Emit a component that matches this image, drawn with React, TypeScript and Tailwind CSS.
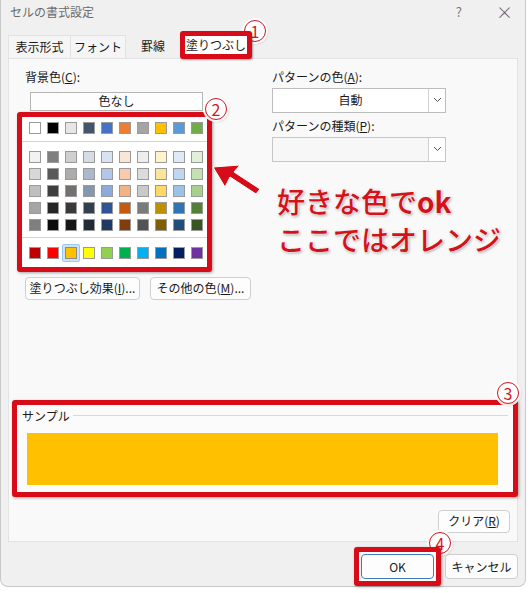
import React from 'react';

const FONT = { fontFamily: '"Noto Sans CJK JP", "Noto Sans", sans-serif' };

const themeRow = ['#ffffff', '#000000', '#e7e6e6', '#44546a', '#4472c4', '#ed7d31', '#a5a5a5', '#ffc000', '#5b9bd5', '#70ad47'];

const tints = [
  ['#f2f2f2', '#7f7f7f', '#d0cece', '#d6dce4', '#d9e2f3', '#fbe5d5', '#ededed', '#fff2cc', '#deebf6', '#e2efd9'],
  ['#d8d8d8', '#595959', '#aeabab', '#adb9ca', '#b4c6e7', '#f7cbac', '#dbdbdb', '#fee599', '#bdd7ee', '#c5e0b3'],
  ['#bfbfbf', '#3f3f3f', '#757070', '#8496b0', '#8eaadb', '#f4b183', '#c9c9c9', '#ffd965', '#9cc3e5', '#a8d08d'],
  ['#a5a5a5', '#262626', '#3a3838', '#323f4f', '#2f5496', '#c55a11', '#7b7b7b', '#bf9000', '#2e75b5', '#538135'],
  ['#7f7f7f', '#0c0c0c', '#171616', '#222a35', '#1f3864', '#833c0b', '#525252', '#7f6000', '#1e4e79', '#375623'],
];

const standard = ['#c00000', '#ff0000', '#ffc000', '#ffff00', '#92d050', '#00b050', '#00b0f0', '#0070c0', '#002060', '#7030a0'];

function Swatch({ color, selected }: { color: string; selected?: boolean }) {
  if (selected) {
    return (
      <div className="w-[12px] h-[12px] relative">
        <div className="absolute -inset-[3px] rounded-[2px] bg-[#cce4f7] border border-[#99c9ef]" />
        <div className="absolute inset-0 border border-[#8a8a8a]" style={{ backgroundColor: color }} />
      </div>
    );
  }
  return <div className="w-[12px] h-[12px] border border-[#9a9a9a]" style={{ backgroundColor: color }} />;
}

function Badge({ n, className }: { n: string; className: string }) {
  return (
    <div
      className={`absolute w-[22px] h-[22px] rounded-full bg-white border-[1.5px] border-[#d41522] flex items-center justify-center text-[#d41522] text-[16px] leading-none shadow-[0_0_0_2px_rgba(255,255,255,0.9),1px_1px_3px_rgba(0,0,0,0.35)] ${className}`}
    >
      {n}
    </div>
  );
}

function Chevron() {
  return (
    <svg width="9" height="6" viewBox="0 0 9 6" fill="none">
      <path d="M1 1l3.5 3.5L8 1" stroke="#555" strokeWidth="1" />
    </svg>
  );
}

export default function App() {
  return (
    <div className="w-[530px] h-[593px] bg-white relative overflow-hidden text-[12px] text-[#1a1a1a]" style={FONT}>
      <div className="w-[526px] h-[587px] bg-[#f0f0f0] border-l border-r border-b border-[#c8c8c8] rounded-b-[8px] flex flex-col">
        {/* title bar */}
        <div className="h-[24px] flex items-center pl-[9px] pr-[12px] text-[#6b6b6b]">
          <span className="text-[12px]">セルの書式設定</span>
          <span className="ml-auto text-[13px] text-[#777]">?</span>
          <span className="ml-[34px] text-[17px] font-light text-[#555] leading-none">×</span>
        </div>

        {/* tabs */}
        <div className="h-[34px] flex items-end pl-[7px]">
          <div className="w-[63px] h-[23px] flex items-center justify-center border border-b-0 border-[#e2e2e2] bg-[#f5f5f5]">表示形式</div>
          <div className="w-[55px] h-[23px] flex items-center justify-center border border-b-0 border-l-0 border-[#e2e2e2] bg-[#f5f5f5]">フォント</div>
          <div className="w-[54px] h-[23px] flex items-center justify-center">罫線</div>
          <div className="w-[72px] h-[28px] -mb-[1px] border-[5px] border-[#d80c18] rounded-[3px] bg-white flex items-center justify-center shadow-[1px_1px_2px_rgba(0,0,0,0.35)] relative z-10">
            塗りつぶし
          </div>
        </div>

        {/* panel */}
        <div className="ml-[7px] w-[510px] h-[485px] bg-[#f9f9f9] border border-[#e3e3e3] flex flex-col">
          <div className="flex pt-[10px]">
            {/* left column */}
            <div className="ml-[8px] w-[195px] shrink-0 flex flex-col">
              <div className="ml-[8px] h-[16px] leading-[16px]">
                背景色(<span className="underline">C</span>):
              </div>
              <div className="ml-[13px] mt-[7px] w-[173px] h-[19px] bg-[#fdfdfd] border border-[#b5b5b5] flex items-center justify-center">
                色なし
              </div>
              <div className="mt-[1px] w-[195px] h-[160px] border-[5px] border-[#d80c18] rounded-[3px] bg-white shadow-[1px_1px_3px_rgba(0,0,0,0.35)] flex flex-col">
                <div className="pl-[7px] pt-[5px] flex gap-[6px]">
                  {themeRow.map((c) => (
                    <Swatch key={c} color={c} />
                  ))}
                </div>
                <div className="mt-[7px] h-px bg-[#d5d5d5]" />
                <div className="pl-[7px] pt-[9px] flex flex-col gap-[5px]">
                  {tints.map((row, i) => (
                    <div key={i} className="flex gap-[6px]">
                      {row.map((c, j) => (
                        <Swatch key={j} color={c} />
                      ))}
                    </div>
                  ))}
                </div>
                <div className="mt-[6px] h-px bg-[#d5d5d5]" />
                <div className="pl-[7px] pt-[9px] flex gap-[6px]">
                  {standard.map((c, i) => (
                    <Swatch key={c} color={c} selected={i === 2} />
                  ))}
                </div>
              </div>
              <div className="mt-[5px] ml-[8px] flex gap-[10px]">
                <div className="shrink-0 w-[115px] h-[23px] bg-[#fdfdfd] border border-[#cfcfcf] rounded-[4px] flex items-center justify-center whitespace-nowrap">
                  塗りつぶし効果(<span className="underline">I</span>)...
                </div>
                <div className="shrink-0 w-[101px] h-[23px] bg-[#fdfdfd] border border-[#cfcfcf] rounded-[4px] flex items-center justify-center whitespace-nowrap">
                  その他の色(<span className="underline">M</span>)...
                </div>
              </div>
            </div>

            {/* right column */}
            <div className="ml-[60px] w-[174px] shrink-0 flex flex-col">
              <div className="h-[16px] leading-[16px]">
                パターンの色(<span className="underline">A</span>):
              </div>
              <div className="mt-[3px] h-[25px] bg-white border border-[#bdbdbd] flex">
                <div className="flex-1 flex items-center justify-center">自動</div>
                <div className="w-[17px] border-l border-[#d0d0d0] flex items-center justify-center">
                  <Chevron />
                </div>
              </div>
              <div className="mt-[5px] h-[16px] leading-[16px]">
                パターンの種類(<span className="underline">P</span>):
              </div>
              <div className="mt-[3px] h-[25px] bg-[#f7f7f7] border border-[#c6c6c6] flex">
                <div className="flex-1" />
                <div className="w-[17px] bg-white border-l border-[#d0d0d0] flex items-center justify-center">
                  <Chevron />
                </div>
              </div>
            </div>
          </div>

          {/* sample */}
          <div className="ml-[3px] mt-[100px] w-[506px] h-[97px] border-[5px] border-[#d80c18] rounded-[3px] bg-[#fbfbfb] shadow-[1px_1px_3px_rgba(0,0,0,0.35)] flex flex-col">
            <div className="h-[22px] flex items-center pl-[5px] pr-[5px]">
              <span>サンプル</span>
              <div className="ml-[3px] flex-1 h-px bg-[#d9d9d9]" />
            </div>
            <div className="ml-[10px] mt-[6px] w-[471px] h-[52px] bg-[#ffc000]" />
          </div>

          <div className="mt-[13px] mr-[7px] self-end w-[72px] h-[23px] bg-[#fdfdfd] border border-[#cfcfcf] rounded-[4px] flex items-center justify-center">
            クリア(<span className="underline">R</span>)
          </div>
        </div>

        {/* bottom buttons */}
        <div className="flex justify-end items-start pr-[7px]">
          <div className="mt-[5px] border-[5px] border-[#d80c18] rounded-[3px] p-[2px] bg-white shadow-[1px_1px_3px_rgba(0,0,0,0.35)] relative z-10">
            <div className="w-[73px] h-[25px] bg-[#fdfdfd] border border-[#3f7fc0] rounded-[4px] flex items-center justify-center">
              OK
            </div>
          </div>
          <div className="mt-[12px] ml-[4px] w-[73px] h-[25px] bg-[#fdfdfd] border border-[#cfcfcf] rounded-[4px] flex items-center justify-center">
            キャンセル
          </div>
        </div>
      </div>

      {/* annotations */}
      <Badge n="1" className="left-[244px] top-[20px]" />
      <Badge n="2" className="left-[205px] top-[98px]" />
      <Badge n="3" className="left-[497px] top-[382px]" />
      <Badge n="4" className="left-[429px] top-[532px]" />

      <svg className="absolute left-[205px] top-[158px]" width="60" height="40" viewBox="0 0 60 40">
        <path d="M8 9 L35 7 L29 14 L55 31 L51 36 L25 19 L20 29 Z" fill="#d80c18" stroke="white" strokeWidth="1" />
      </svg>

      <div className="absolute left-[277px] top-[182px] text-[28px] leading-[38px] font-medium text-[#d3121a] [text-shadow:0_0_2px_white,0_0_2px_white,1px_1px_3px_rgba(0,0,0,0.45)] whitespace-nowrap">
        <div>
          好きな色で<span className="font-bold">ok</span>
        </div>
        <div>ここではオレンジ</div>
      </div>
    </div>
  );
}
